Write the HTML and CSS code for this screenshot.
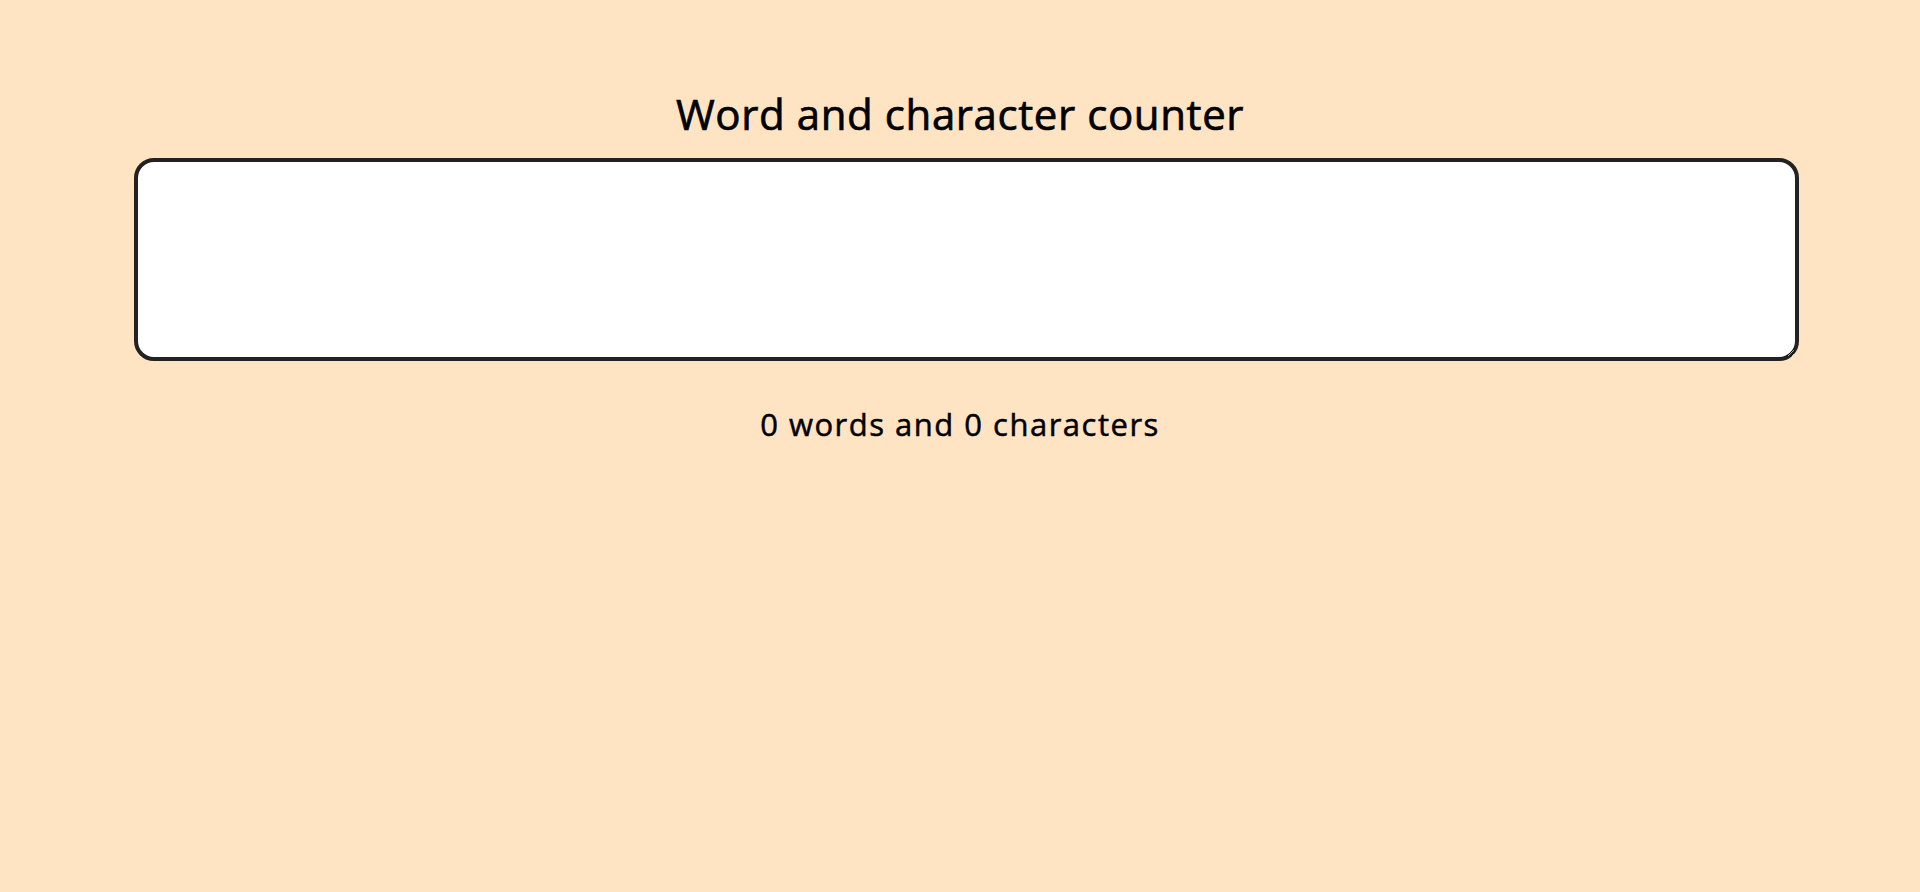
FILE: index.html
```html
<!DOCTYPE html>
<html lang="en">
<head>
<meta charset="utf-8">
<title>Word and character counter</title>
<link rel="stylesheet" href="styles.css">
</head>
<body>
<main class="page">
  <h1 class="title">Word and character counter</h1>
  <textarea class="input" aria-label="Text"></textarea>
  <p class="count">0 words and 0 characters</p>
</main>
</body>
</html>
```
FILE: styles.css
```css
html, body {
  margin: 0;
  padding: 0;
  background: #ffe4c4;
}
body {
  font-family: "Open Sans", "Liberation Sans", sans-serif;
  color: #000;
}
.page {
  display: flex;
  flex-direction: column;
  align-items: center;
  padding-top: 89px;
}
.title {
  margin: 0;
  font-size: 42px;
  line-height: 50px;
  font-weight: 400;
  letter-spacing: 0.6px;
  -webkit-text-stroke: 0.7px #000;
}
.input {
  box-sizing: border-box;
  align-self: flex-start;
  margin: 19px 0 0 134px;
  width: 1665px;
  height: 203px;
  border: 4px solid #222;
  border-radius: 20px;
  background: #fff;
  padding: 8px;
  font-family: inherit;
  font-size: 16px;
  outline: none;
}
.count {
  margin: 45px 0 0;
  font-size: 31px;
  line-height: 36px;
  font-weight: 400;
  letter-spacing: 1.5px;
  -webkit-text-stroke: 0.5px #000;
}
```
